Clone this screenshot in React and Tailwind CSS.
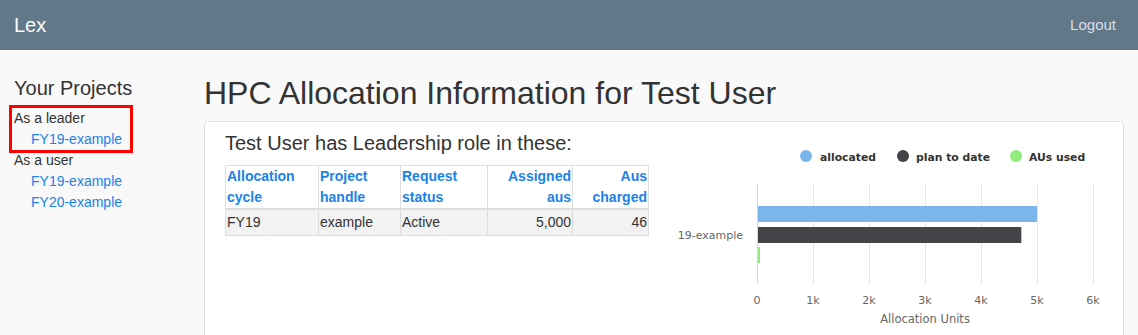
import React from "react";

const projects = [
  { cycle: "FY19", handle: "example", status: "Active", assigned: "5,000", charged: "46" },
];

const ticks = ["0", "1k", "2k", "3k", "4k", "5k", "6k"];

function AllocationChart() {
  const x0 = 109;
  const step = 56;
  const scale = (v) => (v / 1000) * step;
  return (
    <svg width="455" height="230" className="block shrink-0" style={{ fontFamily: '"DejaVu Sans", sans-serif' }}>
      {/* legend */}
      <circle cx="158" cy="34" r="6" fill="#7cb5ec" />
      <text x="172" y="39" fontSize="10.8" fontWeight="bold" fill="#333">allocated</text>
      <circle cx="255" cy="34" r="6" fill="#434348" />
      <text x="268" y="39" fontSize="10.8" fontWeight="bold" fill="#333">plan to date</text>
      <circle cx="368" cy="34" r="6" fill="#90ed7d" />
      <text x="381" y="39" fontSize="10.8" fontWeight="bold" fill="#333">AUs used</text>

      {/* grid */}
      {ticks.map((t, i) => (
        <g key={t}>
          {i > 0 && <line x1={x0 + i * step + 0.5} x2={x0 + i * step + 0.5} y1="62" y2="162" stroke="#e6e6e6" />}
          <text x={x0 + i * step} y="182" fontSize="11" fill="#666" textAnchor="middle">{t}</text>
        </g>
      ))}
      <line x1={x0 + 0.5} x2={x0 + 0.5} y1="62" y2="162" stroke="#ccd6eb" />

      {/* bars */}
      <rect x={x0 + 1} y="84" width={scale(5000) - 1} height="16" fill="#7cb5ec" />
      <rect x={x0 + 1} y="105" width={scale(4720) - 1} height="16" fill="#434348" />
      <rect x={x0 + 1} y="125" width="2" height="16" fill="#90ed7d" />

      <text x="95" y="117" fontSize="11" fill="#666" textAnchor="end">19-example</text>
      <text x="277" y="201" fontSize="11.5" fill="#666" textAnchor="middle">Allocation Units</text>
    </svg>
  );
}

export default function App() {
  return (
    <div className="min-h-screen bg-[#f9f9f9] text-[#333]" style={{ fontFamily: '"Liberation Sans", Arial, sans-serif' }}>
      <nav className="h-[50px] bg-[#617889] flex items-center justify-between pl-[14px] pr-[22px]">
        <span className="text-white text-[20px]">Lex</span>
        <span className="text-[#d9dee3] text-[15px]">Logout</span>
      </nav>

      <div className="flex">
        <aside className="w-[190px] shrink-0 pl-[14px] pt-[26px] text-[14px] leading-[21px]">
          <h4 className="text-[20px] leading-[24px] mb-[8px]">Your Projects</h4>
          <div className="relative">
            {/* highlight box drawn over the leader section */}
            <span className="absolute -left-[5px] -top-[3px] w-[124px] h-[48px] border-[3px] border-[#ff0000]" />
            <div>As a leader</div>
            <a className="block pl-[17px] text-[#1a82e8]">FY19-example</a>
          </div>
          <div>As a user</div>
          <a className="block pl-[17px] text-[#1a82e8]">FY19-example</a>
          <a className="block pl-[17px] text-[#1a82e8]">FY20-example</a>
        </aside>

        <main className="flex-1 pt-[24px] px-[14px]">
          <h1 className="text-[32px] leading-[38px] mb-[9px]">HPC Allocation Information for Test User</h1>
          <div className="bg-white border border-[#dddddd] rounded-[4px] px-5 pb-5">
            <div className="flex">
              <div className="w-[423px] shrink-0 pt-[9px]">
                <h4 className="text-[20px] leading-[24px] mb-[10px]">Test User has Leadership role in these:</h4>
                <table className="w-[423px] border-collapse text-[14px] leading-[21px] table-fixed">
                  <colgroup>
                    <col className="w-[93px]" />
                    <col className="w-[82px]" />
                    <col className="w-[87px]" />
                    <col className="w-[85px]" />
                    <col className="w-[76px]" />
                  </colgroup>
                  <thead>
                    <tr className="text-[#1a82e8] font-bold">
                      <th className="border border-[#dddddd] border-b-2 px-[1px] py-0 text-left align-bottom">Allocation cycle</th>
                      <th className="border border-[#dddddd] border-b-2 px-[1px] py-0 text-left align-bottom">Project handle</th>
                      <th className="border border-[#dddddd] border-b-2 px-[1px] py-0 text-left align-bottom">Request status</th>
                      <th className="border border-[#dddddd] border-b-2 px-[1px] py-0 text-right align-bottom">Assigned aus</th>
                      <th className="border border-[#dddddd] border-b-2 px-[1px] py-0 text-right align-bottom">Aus charged</th>
                    </tr>
                  </thead>
                  <tbody>
                    {projects.map((p) => (
                      <tr key={p.cycle} className="bg-[#f2f2f2]">
                        <td className="border border-[#dddddd] px-[1px] py-[2px]">{p.cycle}</td>
                        <td className="border border-[#dddddd] px-[1px] py-[2px]">{p.handle}</td>
                        <td className="border border-[#dddddd] px-[1px] py-[2px]">{p.status}</td>
                        <td className="border border-[#dddddd] px-[1px] py-[2px] text-right">{p.assigned}</td>
                        <td className="border border-[#dddddd] px-[1px] py-[2px] text-right">{p.charged}</td>
                      </tr>
                    ))}
                  </tbody>
                </table>
              </div>
              <AllocationChart />
            </div>
          </div>
        </main>
      </div>
    </div>
  );
}
